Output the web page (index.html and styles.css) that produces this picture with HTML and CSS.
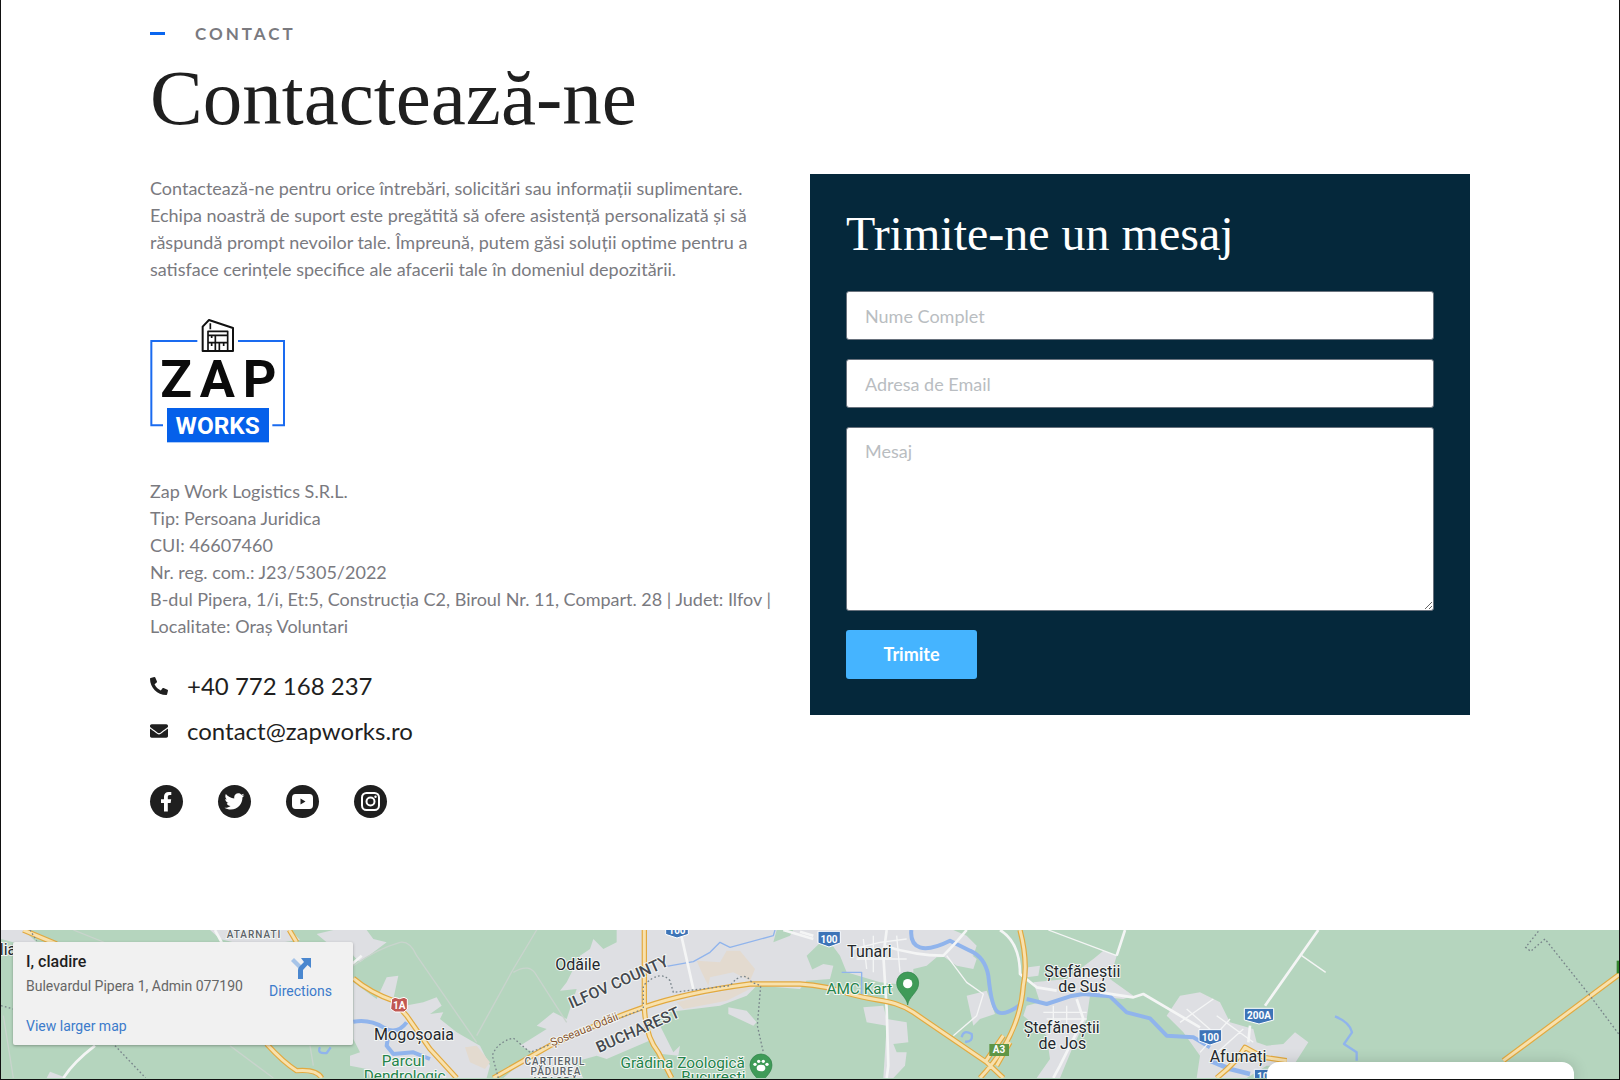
FILE: index.html
```html
<!DOCTYPE html>
<html lang="ro">
<head>
<meta charset="utf-8">
<meta name="viewport" content="width=device-width, initial-scale=1">
<title>Contact</title>
<link rel="stylesheet" href="styles.css">
</head>
<body>
<main class="page">
  <section class="contact">
    <p class="eyebrow">Contact</p>
    <h1 class="title">Contactează-ne</h1>
    <div class="columns">
      <div class="info">
        <p class="text">Contactează-ne pentru orice întrebări, solicitări sau informații suplimentare.<br>Echipa noastră de suport este pregătită să ofere asistență personalizată și să<br>răspundă prompt nevoilor tale. Împreună, putem găsi soluții optime pentru a<br>satisface cerințele specifice ale afacerii tale în domeniul depozitării.</p>
        <svg class="logo" viewBox="30 59 405 372" role="img" aria-label="Zap Works">
          <g fill="none" stroke="#1a6bf0" stroke-width="6">
            <path d="M172 125H34V378H69M294 125H432V378H397"/>
          </g>
          <g fill="none" stroke="#111" stroke-width="6" stroke-linejoin="round">
            <path d="M188 155V82L207 62L279 86V155Z"/>
            <path d="M204 155V96H263V155M204 108H263M204 130H238V155M238 130H263M226 108V155M211 72V90M215 108V116M215 132V140M251 132V140" stroke-width="5"/>
          </g>
          <g class="logo-zap">
            <text x="61" y="293">Z</text>
            <text x="179" y="293">A</text>
            <text x="308" y="293">P</text>
          </g>
          <rect x="81" y="326" width="306" height="103" fill="#0560ea"/>
          <text class="logo-works" x="233" y="404">WORKS</text>
        </svg>
        <p class="text">Zap Work Logistics S.R.L.<br>Tip: Persoana Juridica<br>CUI: 46607460<br>Nr. reg. com.: J23/5305/2022<br>B-dul Pipera, 1/i, Et:5, Construcția C2, Biroul Nr. 11, Compart. 28 | Judet: Ilfov |<br>Localitate: Oraș Voluntari</p>
        <ul class="links">
          <li><a href="tel:+40772168237"><svg viewBox="0 0 512 512" aria-hidden="true"><path d="M493 25 389 1c-11-3-23 3-27 14l-48 112c-4 10-1 22 7 28l61 50c-36 76-99 140-177 177l-50-61c-6-8-18-11-28-7L15 362c-11 5-17 16-14 28l24 104c2 11 12 18 23 18 256 0 464-208 464-464 0-11-8-21-19-23z" transform="matrix(-1 0 0 1 512 0)"/></svg>+40 772 168 237</a></li>
          <li><a href="mailto:contact@zapworks.ro"><svg viewBox="0 0 512 512" aria-hidden="true"><path d="M502 191c4-3 10 0 10 5v204c0 27-21 48-48 48H48c-27 0-48-21-48-48V196c0-5 6-8 10-5 22 17 52 40 155 114 21 16 57 48 91 48 34 0 71-33 91-48 103-74 133-97 155-114zM256 320c23 0 57-29 74-42 132-96 142-104 173-128 6-5 9-12 9-19v-19c0-27-21-48-48-48H48c-27 0-48 21-48 48v19c0 7 3 14 9 19 31 24 41 32 173 128 17 13 51 42 74 42z"/></svg>contact@zapworks.ro</a></li>
        </ul>
        <div class="social">
          <a href="#" aria-label="Facebook"><svg viewBox="0 0 33 33"><path d="M14 26.500v-8.500h-3v-3.700h3v-2.700c0-3.100 1.800-4.700 4.600-4.700 1.300 0 2.700.2 2.700.2v3h-1.500c-1.500 0-2 .9-2 1.900v2.300h3.400l-.6 3.700h-2.800v8.500z"/></svg></a>
          <a href="#" aria-label="Twitter"><svg viewBox="0 0 33 33"><path transform="translate(6.500 6.500) scale(.039)" d="M459 152c0 4 0 9 0 14 0 138-105 298-298 298-59 0-114-17-161-47 8 1 16 1 25 1 49 0 94-17 130-45-46-1-85-31-98-73 7 1 13 2 20 2 9 0 19-1 28-4-48-10-84-52-84-103v-1c14 8 30 13 47 13-28-19-47-51-47-87 0-19 5-37 14-53 52 64 129 105 216 110-2-8-3-16-3-24 0-58 47-105 105-105 30 0 58 13 77 33 24-5 46-13 66-25-8 24-24 45-46 58 21-2 42-8 60-16-14 21-32 39-52 54z"/></svg></a>
          <a href="#" aria-label="YouTube"><svg viewBox="0 0 33 33"><path fill-rule="evenodd" d="M9.500 9h14q3.500 0 3.500 4v7q0 4-3.500 4h-14q-3.500 0-3.500-4v-7q0-4 3.500-4zM14.500 13.500v6l5-3z"/></svg></a>
          <a href="#" aria-label="Instagram"><svg viewBox="0 0 33 33"><g fill="none" stroke="#fff" stroke-width="2"><rect x="8" y="8" width="17" height="17" rx="4.500"/><circle cx="16.500" cy="16.500" r="4"/></g><circle cx="21.500" cy="11.700" r="1.200"/></svg></a>
        </div>
      </div>
      <form class="form" action="#">
        <h2 class="form-title">Trimite-ne un mesaj</h2>
        <input class="field" type="text" placeholder="Nume Complet" aria-label="Nume Complet">
        <input class="field" type="email" placeholder="Adresa de Email" aria-label="Adresa de Email">
        <textarea class="field area" placeholder="Mesaj" aria-label="Mesaj"></textarea>
        <button class="send" type="submit">Trimite</button>
      </form>
    </div>
  </section>
  <section class="map" aria-label="Map">
    <svg class="map-art" viewBox="3 33 4854 444">
      <rect width="4900" height="900" fill="#b5d5be"/>
      <!-- built-up areas -->
      <g fill="#dedfe3">
        <path d="M630 33H870L900 62 850 70H700L660 60ZM950 45 1000 33 1100 33 1120 60 1160 70 1080 130 1060 110 1050 70 980 70Z"/>
        <path d="M1060 190 1130 240 1160 175 1195 170 1180 240 1215 260 1270 250 1310 235 1325 260 1290 285 1330 280 1320 300 1370 340 1440 380 1470 440 1460 477H1110L1100 450 1050 440 1050 410 1080 400 1060 360Z"/>
        <path d="M3 33H70L110 70H40L3 60ZM140 477 150 458 200 477Z"/>
        <path d="M1510 477 1600 400 1560 380 1640 330 1610 320 1660 280 1700 300 1730 210 1680 215 1700 190 1740 110 1770 90 1780 60 1810 90 1850 70V33H2330L2320 70 2370 50 2380 33H2500L2420 110 2440 160 2400 210 2270 200 2240 230 2160 260 2000 280 1970 300 2020 400 2040 380 2035 410 1985 405 1960 360 1820 420 1790 410 1720 430 1750 477ZM2185 265 2240 275 2270 310 2260 320 2185 285Z"/>
        <path d="M2440 33H2860L2900 50 2930 80 2920 110 2810 115 2780 140 2740 150 2740 200 2640 190 2540 160 2520 110 2490 70ZM2420 160 2470 135 2500 140 2490 180 2420 185ZM2590 265 2650 260 2660 300 2720 310 2725 370 2680 375 2690 400 2720 400 2715 440 2680 477H2650L2660 320 2600 310Z"/>
        <path d="M2820 105 2880 80 2930 120 2920 150 2870 140ZM2900 230 2960 215 2985 285 2940 300 2920 320ZM3085 145 3120 140 3115 170 3080 175ZM3100 190 3200 180 3280 120 3310 95 3350 110 3330 180 3400 230 3370 240 3270 230 3260 300 3220 380 3180 477H3110L3150 420 3140 350 3070 290 3080 260 3120 250Z"/>
        <path d="M3500 290 3540 230 3600 220 3660 250 3690 310 3760 330 3770 370 3800 380 3850 375 3885 340 3925 370 3880 440 3800 440 3740 477H3590L3600 410 3550 340Z"/>
      </g>
      <g fill="#e3dacf">
        <path d="M1395 385 1430 380 1470 430 1455 450 1410 430ZM2090 125 2160 130 2180 95 2220 95 2265 150 2250 185 2200 160 2130 175 2125 200 2105 160ZM2030 250 2200 210 2260 205 2180 245 2050 270Z"/>
      </g>
      <!-- water -->
      <g fill="none" stroke="#90b4ec" stroke-linejoin="round">
        <path stroke-width="12" d="M1060 308Q1110 300 1150 325T1220 310M1165 350 1160 380 1180 405 1240 400 1290 420M2734 33Q2730 75 2760 85T2850 65L2910 95Q2955 115 2965 170Q2975 270 2995 280T3060 258M3080 240 3140 255 3210 232 3250 225 3330 232 3380 280 3450 298 3500 350 3580 355 3630 385"/>
        <path stroke-width="7" d="M4005 292Q4050 310 4056 340L4032 375 4070 400V425M960 385Q950 405 980 402L992 385M2885 355Q2890 330 2915 345 2920 370 2895 368"/>
        <path stroke-width="4" d="M2000 142 2080 128 2130 100 2160 70 2190 85 2320 50 2325 33M2525 160H2585V235"/>
        <path stroke-width="14" d="M3630 425 3690 450 3750 465"/>
      </g>
      <!-- minor roads -->
      <g fill="none" stroke="#f4f5f5" stroke-width="8" stroke-linejoin="round">
        <path d="M190 477Q220 430 285 380M645 33 665 70M1050 140 1085 110M2044 50 2080 210M2660 33 2650 110 2660 270 2665 440 2660 477M2400 38 2440 50M2650 80Q2750 110 2830 110 2870 70 2900 33M3000 33Q3060 70 3060 165L3110 205 3170 215M3230 240 3250 300 3180 440 3160 477M3375 33 3350 110M3300 220 3400 235 3430 225 3600 325M3955 33 3795 260M3750 320 3745 370M2350 33 2440 60"/>
        <path stroke-width="4" d="M3905 110 3977 160M3145 33 3350 110M2840 110 2900 190 2950 225 2930 290 2860 350M2560 90 2640 70 2720 60M2570 120H2720M2590 60 2600 150M2620 50V160M2690 50 2700 160M3130 280H3260M3140 300H3260M3160 260V320M3200 260V320M3560 270 3640 340M3540 310 3640 240M3650 290 3760 370M3600 400 3690 300M3630 420 3730 330"/>
        <path stroke="#c9d4cd" stroke-width="4" d="M1200 70Q1230 65 1250 110L1430 370M1430 350 1540 150 1610 33M1540 160Q1590 130 1610 170L1700 310M1060 140Q1130 90 1200 70M220 33 325 75M10 290 40 477M690 380 820 477M930 380 940 440"/>
      </g>
      <!-- main roads -->
      <g fill="none" stroke-linejoin="round">
        <path stroke="#e2a93f" stroke-width="16" d="M70 33 170 75M868 33 890 70M1060 178Q1110 220 1180 245L1220 290 1290 390 1370 477M800 375Q850 430 890 455 950 450 965 477M1480 477 1650 380Q1800 310 1930 265T2250 195L2400 195Q2480 200 2550 225C2640 250 2680 240 2740 280L2960 430 3010 477M1933 33V260Q1935 350 1975 400L2015 477M2940 477Q3060 350 3070 200 3085 130 3060 33M2955 430 3010 350M2990 440 3030 370M4510 425 4860 165M3650 477Q3710 430 3735 385L3790 415 3860 425"/>
        <path stroke="#f8e1ad" stroke-width="9" d="M70 33 170 75M868 33 890 70M1060 178Q1110 220 1180 245L1220 290 1290 390 1370 477M800 375Q850 430 890 455 950 450 965 477M1480 477 1650 380Q1800 310 1930 265T2250 195L2400 195Q2480 200 2550 225C2640 250 2680 240 2740 280L2960 430 3010 477M1933 33V260Q1935 350 1975 400L2015 477M2940 477Q3060 350 3070 200 3085 130 3060 33M2955 430 3010 350M2990 440 3030 370M4510 425 4860 165M3650 477Q3710 430 3735 385L3790 415 3860 425"/>
      </g>
      <path fill="none" stroke="#78848a" stroke-width="4" stroke-dasharray="5 7" d="M90 33 110 65M3 260 40 270M345 380 437 477M1495 477 1477 410Q1490 370 1540 357L1590 400 1930 270V200Q1980 150 2010 185L2020 220 2190 200Q2230 150 2255 190L2282 200 2272 320 2290 400M4615 37 4577 85 4592 97 4635 60 4770 230 4860 350"/>
      <rect x="4850" y="125" width="10" height="38" fill="#34852f"/>
      <!-- road shields -->
      <g stroke="#fff" stroke-width="3">
        <path fill="#c15852" d="M1175 240 1185 235 1198 239 1212 235 1222 240V270L1212 279H1185L1172 270Z"/>
        <path fill="#3d74b7" d="M1997 20H2065V46L2031 57 1997 46ZM2454 37H2521V72L2487 84 2454 72ZM3733 268H3821V303L3777 315 3733 303ZM3597 332H3665V366L3630 378 3597 366ZM3763 451H3840V490H3763Z"/>
        <path fill="#5f9645" stroke="none" d="M2968 375H3027V411H2968Z"/>
      </g>
      <g class="shield">
        <text x="1198" y="271">1A</text><text x="2031" y="45">100</text><text x="2487" y="71">100</text><text x="3777" y="301">200A</text><text x="3631" y="365">100</text><text x="3797" y="483">100</text><text x="2997" y="403">A3</text>
      </g>
      <!-- place names -->
      <g class="place">
        <text x="24" y="108">lia</text>
        <text x="1242" y="362">Mogoșoaia</text>
        <text x="1733" y="154">Odăile</text>
        <text x="2608" y="115">Tunari</text>
        <text x="3247" y="173">Ștefăneștii</text><text x="3247" y="220">de Sus</text>
        <text x="3185" y="342">Ștefăneștii</text><text x="3187" y="390">de Jos</text>
        <text x="3714" y="430">Afumați</text>
      </g>
      <g class="place region">
        <text transform="translate(1862 204) rotate(-24)">ILFOV COUNTY</text>
        <text transform="translate(1920 347) rotate(-24)">BUCHAREST</text>
      </g>
      <text class="place street" transform="translate(1757 342) rotate(-22)">Șoseaua Odăii</text>
      <g class="place district">
        <text x="762" y="56">ATÂRNATI</text><text x="1665" y="437">CARTIERUL</text><text x="1668" y="467">PĂDUREA</text><text x="1668" y="497">NEAGRĂ</text>
      </g>
      <g class="place park">
        <text x="1210" y="442">Parcul</text><text x="1214" y="487">Dendrologic</text>
        <text x="2048" y="447">Grădina Zoologică</text><text x="2140" y="490">București</text>
        <text x="2578" y="225">AMC Kart</text>
      </g>
      <g fill="#3f9b58" stroke="#2f8048" stroke-width="2">
        <path d="M2723 258C2720 232 2690 220 2690 192A33 33 0 0 1 2756 192C2756 220 2726 232 2723 258Z"/>
        <path d="M2283 500C2280 478 2250 466 2250 438A33 33 0 0 1 2316 438C2316 466 2286 478 2283 500Z"/>
      </g>
      <g fill="#fff"><circle cx="2723" cy="194" r="14"/><ellipse cx="2283" cy="447" rx="13" ry="10"/><circle cx="2265" cy="436" r="5"/><circle cx="2276" cy="427" r="5"/><circle cx="2290" cy="427" r="5"/><circle cx="2301" cy="436" r="5"/></g>
    </svg>
    <div class="place-card">
      <div class="place-info">
        <h3>I, cladire</h3>
        <p>Bulevardul Pipera 1, Admin 077190</p>
        <a href="#">View larger map</a>
      </div>
      <a class="directions" href="#">
        <svg viewBox="0 0 22 22" aria-hidden="true"><path fill="#a6c4e8" d="M1 4 4 1 12 9 9 12Z"/><path fill="#4a87cf" d="M8 22V13Q8 11 9.500 9.500L14 5 11 1H21V11L17.500 8 13 13V22Z"/></svg>
        Directions
      </a>
    </div>
    <div class="popup"></div>
  </section>
</main>
</body>
</html>
```
FILE: styles.css
```css
* { box-sizing: border-box; }
body {
  margin: 0;
  background: #fff;
  color: #7a7a7f;
  font: 18px/27px Lato, "Open Sans", sans-serif;
}
h1, h2, h3, p, ul { margin: 0; padding: 0; font-weight: 400; }
a { color: inherit; text-decoration: none; }

.page {
  display: flex;
  flex-direction: column;
  min-height: 100vh;
  border: 1px solid #111;
  border-top: 0;
}
.contact {
  width: 100%;
  max-width: 1320px;
  margin: 0 auto;
  padding: 20px 0 112px;
}
.eyebrow {
  display: flex;
  align-items: center;
  gap: 30px;
  font-size: 17px;
  font-weight: 700;
  letter-spacing: 3px;
  text-transform: uppercase;
}
.eyebrow::before {
  content: "";
  width: 15px;
  height: 3px;
  background: #0a66ef;
}
.title {
  margin: 6px 0 31px;
  color: #1f1f1f;
  font: 79px/90px "Liberation Serif", serif;
}
.columns {
  display: grid;
  grid-template-columns: 1fr 1fr;
  align-items: start;
}
.info { padding-top: 1px; }
.text { white-space: nowrap; }
.logo {
  display: block;
  width: 135px;
  height: 124px;
  margin: 36px 0 35px;
}
.logo-zap { font: 700 157px Roboto, sans-serif; fill: #0b0b0b; }
.logo-works { font: 700 73px Roboto, sans-serif; fill: #fff; text-anchor: middle; }

.links {
  display: grid;
  gap: 15px;
  margin: 31px 0 39px;
  list-style: none;
  color: #1f1f1f;
  font-size: 24px;
  line-height: 30px;
}
.links a { display: flex; align-items: center; gap: 19px; }
.links svg { width: 18px; height: 18px; fill: #1f1f1f; }

.social { display: flex; gap: 35px; }
.social a {
  width: 33px;
  height: 33px;
  border-radius: 50%;
  background: #1f1f1f;
}
.social svg { display: block; fill: #fff; }

.form {
  display: flex;
  flex-direction: column;
  align-items: flex-start;
  gap: 19px;
  padding: 36px;
  background: #05283b;
}
.form-title {
  margin-bottom: 14px;
  color: #fff;
  font: 48px/48px "Liberation Serif", serif;
}
.field {
  width: 100%;
  height: 49px;
  padding: 10px 18px;
  border: 1px solid #69727d;
  border-radius: 3px;
  background: #fff;
  color: #333;
  font: inherit;
}
.field::placeholder { color: #b9bdc1; opacity: 1; }
.area { height: 184px; resize: vertical; }
.send {
  width: 131px;
  height: 49px;
  border: 0;
  border-radius: 3px;
  background: #45b4ff;
  color: #fff;
  font: inherit;
  font-weight: 700;
}

.map {
  position: relative;
  flex: 1;
  min-height: 148px;
  overflow: hidden;
  background: #b5d5be;
  font-family: Roboto, sans-serif;
}
.map-art { display: block; width: 100%; }
.place {
  fill: #24282c;
  stroke: #f3f6f4;
  stroke-width: 6px;
  paint-order: stroke;
  font-size: 48px;
  text-anchor: middle;
}
.region { fill: #45494f; font-size: 47px; font-weight: 500; }
.street { fill: #87552f; font-size: 34px; }
.district { fill: #5c6267; font-size: 30px; font-weight: 500; letter-spacing: 3px; }
.park { fill: #23834a; font-size: 46px; }
.shield { fill: #fff; font-size: 30px; font-weight: 700; text-anchor: middle; }

.place-card {
  position: absolute;
  left: 12px;
  top: 12px;
  display: flex;
  justify-content: space-between;
  width: 340px;
  height: 103px;
  padding: 10px 21px 9px 13px;
  border-radius: 2px;
  background: #f1f1f1;
  box-shadow: 0 1px 3px rgba(0, 0, 0, .3);
  color: #666;
  font-size: 14px;
  line-height: 20px;
}
.place-card a { color: #3c7bcb; }
.place-info h3 { margin-bottom: 4px; color: #1f1f1f; font-size: 16px; font-weight: 500; }
.place-info p { margin-bottom: 20px; }
.directions {
  display: flex;
  flex-direction: column;
  align-items: center;
  gap: 2px;
  padding-top: 5px;
}
.directions svg { width: 22px; height: 22px; }
.popup {
  position: absolute;
  right: 45px;
  bottom: 0;
  width: 307px;
  height: 17px;
  border-radius: 12px 12px 0 0;
  background: #fff;
  box-shadow: 0 2px 16px rgba(0, 0, 0, .2);
}
```
